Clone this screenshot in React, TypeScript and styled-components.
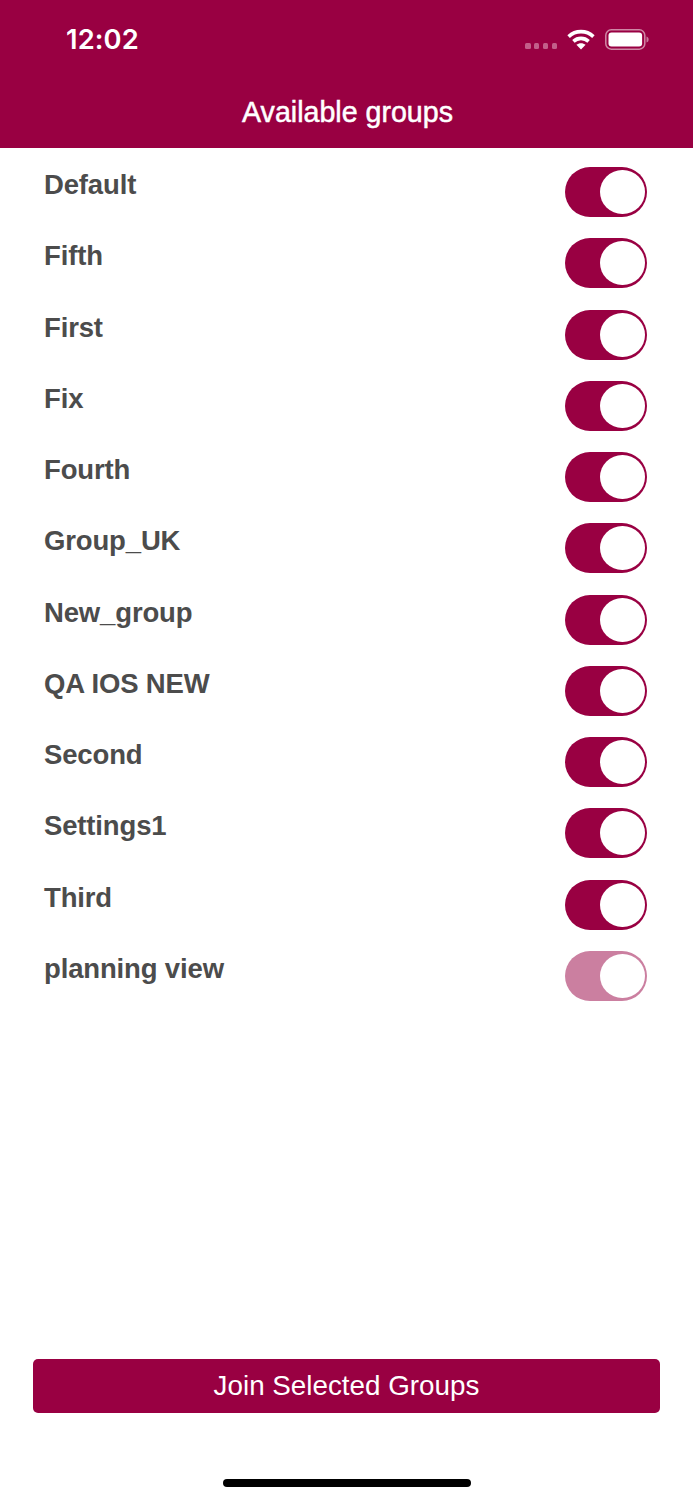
import React from "react";
import styled, { createGlobalStyle } from "styled-components";

const Global = createGlobalStyle`
  html, body { margin: 0; padding: 0; background: #fff; }
  body { font-family: "Liberation Sans", Arial, sans-serif; }
`;

const Screen = styled.div`
  width: 693px;
  height: 1500px;
  display: flex;
  flex-direction: column;
  background: #fff;
  overflow: hidden;
`;

const Header = styled.header`
  height: 148px;
  flex: none;
  display: flex;
  flex-direction: column;
  background: #990042;
  color: #fff;
`;

const StatusBar = styled.div`
  height: 78px;
  display: flex;
  align-items: center;
  justify-content: space-between;
  padding: 0 44px 0 66px;
`;

const Time = styled.span`
  font-family: Inter, "Liberation Sans", sans-serif;
  font-size: 27.3px;
  font-weight: 600;
  letter-spacing: 0.1px;
`;

const StatusIcons = styled.div`
  display: flex;
  align-items: center;
  gap: 10px;
`;

const Dots = styled.div`
  display: flex;
  gap: 3.4px;
  margin-top: 14px;
`;

const Dot = styled.span`
  width: 5.4px;
  height: 5.4px;
  border-radius: 1.5px;
  background: #c25f8a;
`;

const Title = styled.h1`
  margin: 0;
  height: 70px;
  padding-left: 2px;
  line-height: 68px;
  text-align: center;
  font-size: 28.6px;
  font-weight: 400;
  -webkit-text-stroke: 0.5px #fff;
`;

const List = styled.div`
  display: flex;
  flex-direction: column;
  gap: 21.25px;
  padding: 19px 46px 0 44px;
`;

const Row = styled.div`
  height: 50px;
  display: flex;
  align-items: flex-start;
  justify-content: space-between;
`;

const Label = styled.span`
  font-size: 27.5px;
  font-weight: 700;
  line-height: 36px;
  letter-spacing: -0.15px;
  color: #4c4c4c;
`;

const Toggle = styled.div<{ $muted?: boolean }>`
  width: 82px;
  height: 50px;
  flex: none;
  box-sizing: border-box;
  padding: 3px 2.5px 3px 0;
  display: flex;
  justify-content: flex-end;
  border-radius: 25px;
  background: ${(p) => (p.$muted ? "#cb7fa0" : "#990042")};
`;

const Thumb = styled.span`
  width: 44.5px;
  height: 44px;
  border-radius: 50%;
  background: #fff;
`;

const Footer = styled.div`
  margin-top: auto;
  display: flex;
  flex-direction: column;
  align-items: center;
  padding-bottom: 13px;
`;

const JoinButton = styled.button`
  width: 627px;
  height: 53.5px;
  border: 0;
  border-radius: 5px;
  background: #990042;
  color: #fff;
  font-family: inherit;
  font-size: 27.8px;
  padding: 1px 0 0;
`;

const HomeIndicator = styled.div`
  width: 248px;
  height: 8px;
  margin-top: 66.5px;
  border-radius: 4px;
  background: #000;
`;

const groups = [
  "Default", "Fifth", "First", "Fix", "Fourth", "Group_UK",
  "New_group", "QA IOS NEW", "Second", "Settings1", "Third", "planning view",
];

const Wifi = () => (
  <svg width="28" height="21" viewBox="0 0 28 21" fill="none" stroke="#fff" strokeWidth="3.6">
    <path d="M1.6 7.6C8.6 1 19.4 1 26.4 7.6" />
    <path d="M6.4 12.4C10.8 8.4 17.2 8.4 21.6 12.4" />
    <path d="M14 20.5L9.4 15.8C12 13.6 16 13.6 18.6 15.8Z" fill="#fff" stroke="none" />
  </svg>
);

const Battery = () => (
  <svg width="44" height="21" viewBox="0 0 44 21" fill="none">
    <rect x="0.8" y="0.8" width="39" height="19.4" rx="5.5" stroke="#cf88a6" strokeWidth="1.5" />
    <rect x="3.5" y="3.5" width="33.6" height="14" rx="3" fill="#fff" />
    <path d="M41.5 7.5C43 8 43.6 9 43.6 10.5C43.6 12 43 13 41.5 13.5Z" fill="#c87a9c" />
  </svg>
);

export default function App() {
  return (
    <Screen>
      <Global />
      <Header>
        <StatusBar>
          <Time>12:02</Time>
          <StatusIcons>
            <Dots>
              <Dot /><Dot /><Dot /><Dot />
            </Dots>
            <Wifi />
            <Battery />
          </StatusIcons>
        </StatusBar>
        <Title>Available groups</Title>
      </Header>
      <List>
        {groups.map((g) => (
          <Row key={g}>
            <Label>{g}</Label>
            <Toggle $muted={g === "planning view"}>
              <Thumb />
            </Toggle>
          </Row>
        ))}
      </List>
      <Footer>
        <JoinButton>Join Selected Groups</JoinButton>
        <HomeIndicator />
      </Footer>
    </Screen>
  );
}
